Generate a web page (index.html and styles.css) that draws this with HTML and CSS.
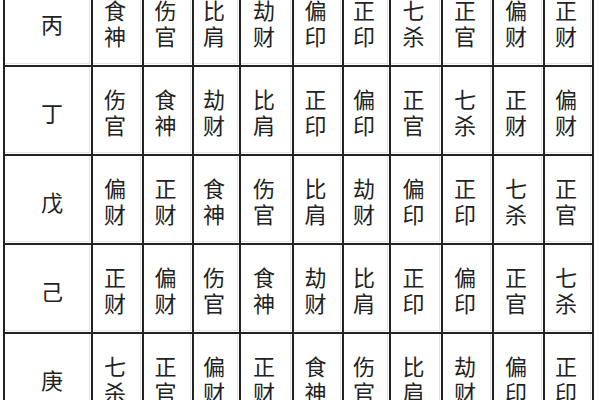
FILE: index.html
```html
<!DOCTYPE html>
<html lang="zh">
<head>
<meta charset="utf-8">
<title>十神表</title>
<link rel="stylesheet" href="styles.css">
</head>
<body>
<div class="table">
  <div class="cell label">丙</div>
  <div class="cell"><span>食</span><span>神</span></div>
  <div class="cell"><span>伤</span><span>官</span></div>
  <div class="cell"><span>比</span><span>肩</span></div>
  <div class="cell"><span>劫</span><span>财</span></div>
  <div class="cell"><span>偏</span><span>印</span></div>
  <div class="cell"><span>正</span><span>印</span></div>
  <div class="cell"><span>七</span><span>杀</span></div>
  <div class="cell"><span>正</span><span>官</span></div>
  <div class="cell"><span>偏</span><span>财</span></div>
  <div class="cell"><span>正</span><span>财</span></div>

  <div class="cell label">丁</div>
  <div class="cell"><span>伤</span><span>官</span></div>
  <div class="cell"><span>食</span><span>神</span></div>
  <div class="cell"><span>劫</span><span>财</span></div>
  <div class="cell"><span>比</span><span>肩</span></div>
  <div class="cell"><span>正</span><span>印</span></div>
  <div class="cell"><span>偏</span><span>印</span></div>
  <div class="cell"><span>正</span><span>官</span></div>
  <div class="cell"><span>七</span><span>杀</span></div>
  <div class="cell"><span>正</span><span>财</span></div>
  <div class="cell"><span>偏</span><span>财</span></div>

  <div class="cell label">戊</div>
  <div class="cell"><span>偏</span><span>财</span></div>
  <div class="cell"><span>正</span><span>财</span></div>
  <div class="cell"><span>食</span><span>神</span></div>
  <div class="cell"><span>伤</span><span>官</span></div>
  <div class="cell"><span>比</span><span>肩</span></div>
  <div class="cell"><span>劫</span><span>财</span></div>
  <div class="cell"><span>偏</span><span>印</span></div>
  <div class="cell"><span>正</span><span>印</span></div>
  <div class="cell"><span>七</span><span>杀</span></div>
  <div class="cell"><span>正</span><span>官</span></div>

  <div class="cell label">己</div>
  <div class="cell"><span>正</span><span>财</span></div>
  <div class="cell"><span>偏</span><span>财</span></div>
  <div class="cell"><span>伤</span><span>官</span></div>
  <div class="cell"><span>食</span><span>神</span></div>
  <div class="cell"><span>劫</span><span>财</span></div>
  <div class="cell"><span>比</span><span>肩</span></div>
  <div class="cell"><span>正</span><span>印</span></div>
  <div class="cell"><span>偏</span><span>印</span></div>
  <div class="cell"><span>正</span><span>官</span></div>
  <div class="cell"><span>七</span><span>杀</span></div>

  <div class="cell label">庚</div>
  <div class="cell"><span>七</span><span>杀</span></div>
  <div class="cell"><span>正</span><span>官</span></div>
  <div class="cell"><span>偏</span><span>财</span></div>
  <div class="cell"><span>正</span><span>财</span></div>
  <div class="cell"><span>食</span><span>神</span></div>
  <div class="cell"><span>伤</span><span>官</span></div>
  <div class="cell"><span>比</span><span>肩</span></div>
  <div class="cell"><span>劫</span><span>财</span></div>
  <div class="cell"><span>偏</span><span>印</span></div>
  <div class="cell"><span>正</span><span>印</span></div>
</div>
</body>
</html>
```

FILE: styles.css
```css
html, body {
  margin: 0;
  padding: 0;
  background: #fff;
  overflow: hidden;
}

body {
  font-family: "Noto Sans CJK SC", "Noto Sans", sans-serif;
  color: #222;
}

.table {
  display: grid;
  grid-template-columns: 88px 51px 50px 47px 53px 50px 47px 52px 51px 51px 49px;
  grid-auto-rows: 89px;
  width: max-content;
  margin: -24px 0 0 3px;
  border-left: 2px solid #222;
  border-top: 2px solid #222;
}

.cell {
  box-sizing: border-box;
  display: flex;
  flex-direction: column;
  align-items: center;
  justify-content: center;
  border-right: 2px solid #222;
  border-bottom: 2px solid #222;
  box-shadow: inset -1px -1px 0 #fff, inset -2px -2px 0 #e4e4e4;
  padding-right: 5px;
  font-size: 22px;
  line-height: 26px;
}

.cell span {
  display: block;
}

.label {
  padding-right: 0;
  padding-left: 8px;
  padding-top: 3px;
}
```
